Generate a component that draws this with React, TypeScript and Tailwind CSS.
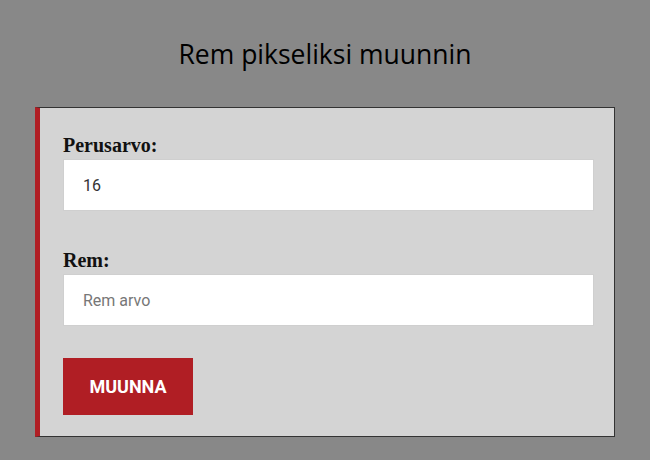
import React, { useState } from "react";

const App = () => {
  const [base, setBase] = useState("16");
  const [rem, setRem] = useState("");

  return (
    <div className="min-h-[460px] w-[650px] bg-[#888888] pt-[36px]">
      {/* Title */}
      <h1 className="text-center text-[26.5px] leading-[36px] text-black font-['Open_Sans',sans-serif]">
        Rem pikseliksi muunnin
      </h1>

      {/* Card */}
      <div className="ml-[35px] mt-[35px] w-[580px] border border-[#333] border-l-[5px] border-l-[#b01e24] bg-[#d4d4d4] pl-[23px] pr-[20px] pt-[26px] pb-[21px]">
        <label className="block text-[20px] leading-[22px] font-bold text-[#111] font-['Liberation_Serif',serif] mb-[3px]">
          Perusarvo:
        </label>
        <input
          value={base}
          onChange={(e) => setBase(e.target.value)}
          className="block h-[52px] w-full border border-[#cfcfcf] bg-white px-[19px] text-[16px] text-[#333] outline-none font-['Roboto',sans-serif]"
        />

        <label className="mt-[38px] block text-[20px] leading-[22px] font-bold text-[#111] font-['Liberation_Serif',serif] mb-[3px]">
          Rem:
        </label>
        <input
          value={rem}
          onChange={(e) => setRem(e.target.value)}
          placeholder="Rem arvo"
          className="block h-[52px] w-full border border-[#cfcfcf] bg-white px-[19px] text-[16px] text-[#333] placeholder:text-[#777] outline-none font-['Roboto',sans-serif]"
        />

        <button className="mt-[32px] block h-[57px] w-[130px] bg-[#b01e24] text-[18px] font-bold text-white font-['Roboto',sans-serif]">
          MUUNNA
        </button>
      </div>
    </div>
  );
};

export default App;
